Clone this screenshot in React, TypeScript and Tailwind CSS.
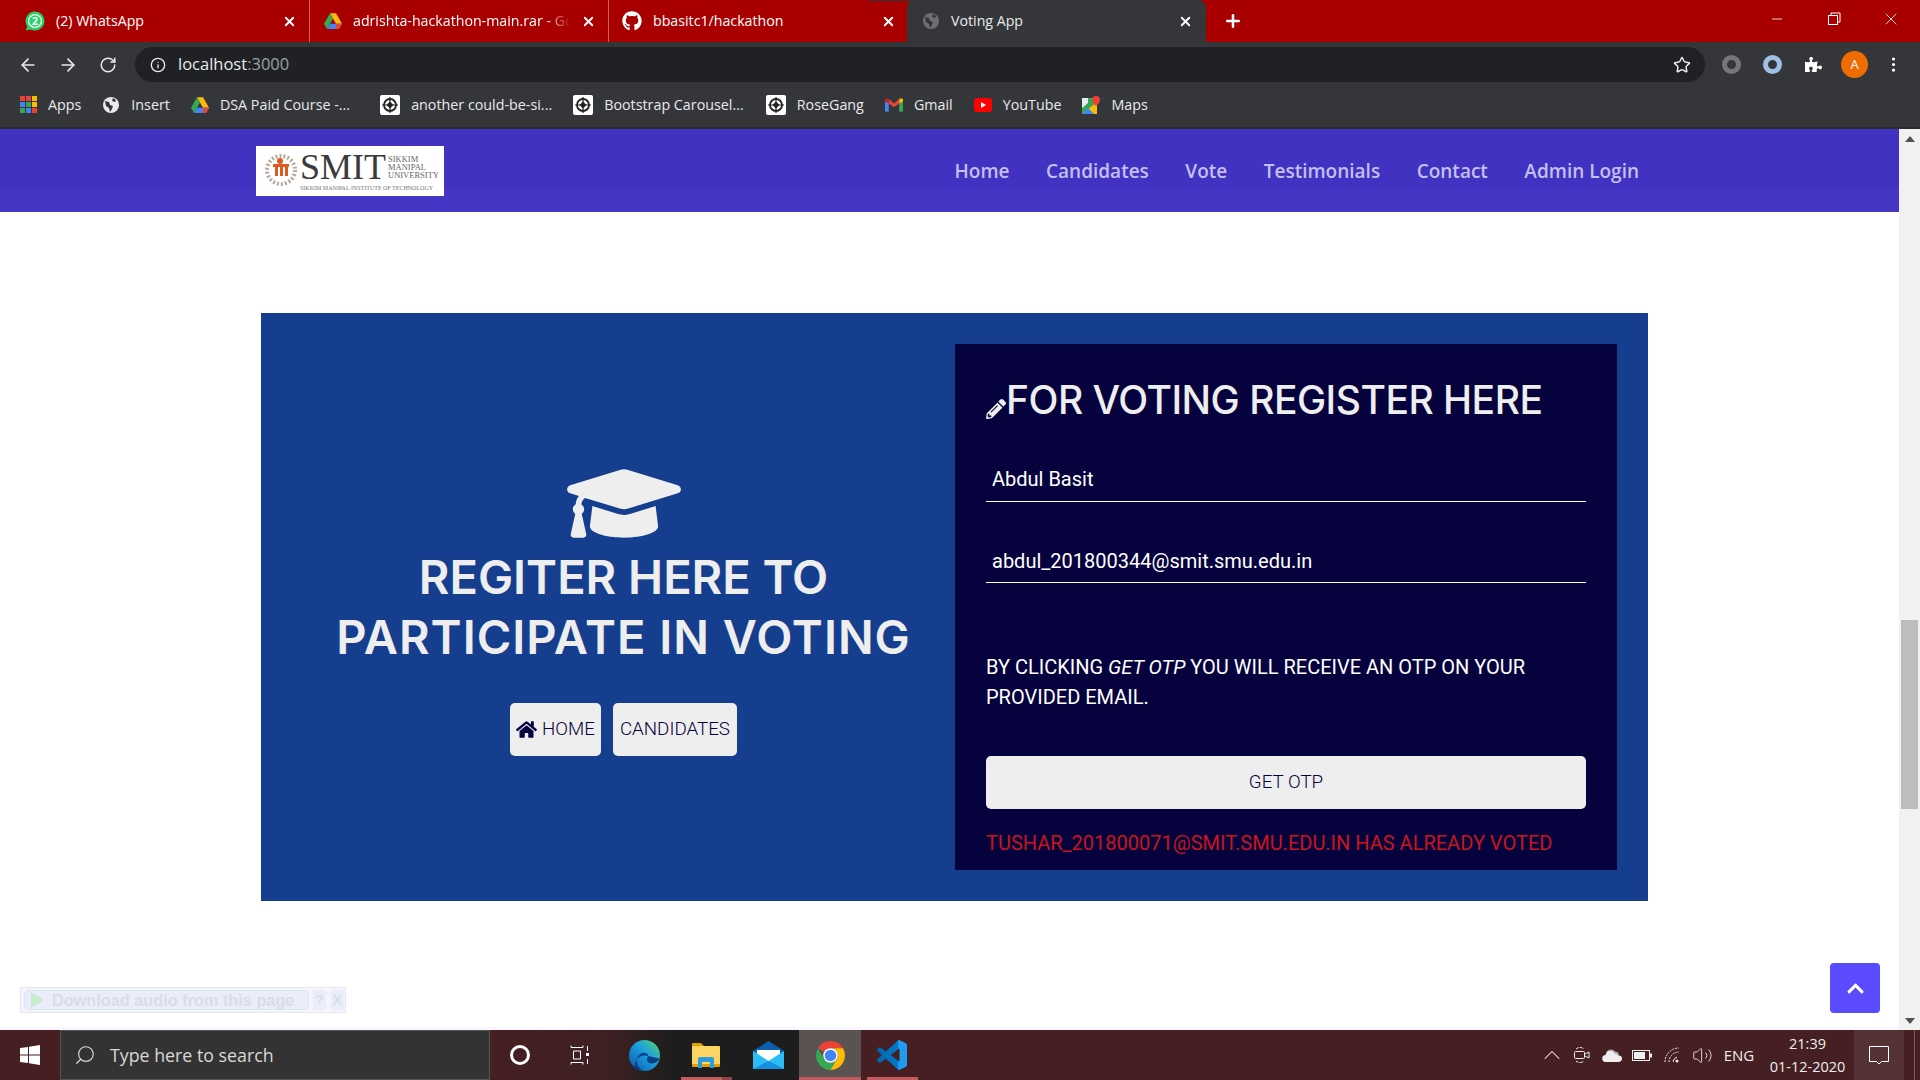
import React from 'react';
import { FaChevronUp, FaGithub, FaGraduationCap, FaHome, FaPencilAlt, FaPuzzlePiece } from 'react-icons/fa';
import { ArrowLeft, ArrowRight, ChevronUp, Info, Minus, MoreVertical, Plus, RotateCw, Search, Star, Volume2, X } from 'lucide-react';

function WhatsappBadge() {
  return (
    <svg width="20" height="20" viewBox="0 0 20 20">
      <path d="M10 0.500a9.500 9.500 0 0 1 0 19 9.500 9.500 0 0 1-4.500-1.100L1 19.500l1.200-4.300A9.500 9.500 0 0 1 10 0.500z" fill="#25d366" />
      <circle cx="10" cy="10" r="7" fill="#fff" />
      <circle cx="10" cy="10" r="5.800" fill="#25d366" />
      <text x="10" y="14" textAnchor="middle" fontSize="11" fontWeight="700" fill="#fff" fontFamily="Open Sans, sans-serif">2</text>
    </svg>
  );
}

function DriveIcon() {
  return (
    <svg width="18" height="16" viewBox="0 0 24 21">
      <path d="M8 0h8l8 14h-8z" fill="#fbbc04" />
      <path d="M8 0l4 7-8 14-4-7z" fill="#34a853" />
      <path d="M8 14h16l-4 7H4z" fill="#4285f4" />
      <path d="M17 14h7l-4 7h-5z" fill="#ea4335" />
    </svg>
  );
}

function GmailIcon() {
  return (
    <svg width="18" height="14" viewBox="0 0 24 18">
      <path d="M0 3l5 3v12H2a2 2 0 0 1-2-2z" fill="#4285f4" />
      <path d="M24 3l-5 3v12h3a2 2 0 0 0 2-2z" fill="#34a853" />
      <path d="M5 1l7 6 7-6v6l-7 5-7-5z" fill="#ea4335" />
      <path d="M19 1l2-1 3 1v3l-5 3z" fill="#fbbc04" />
      <path d="M5 1L3 0 0 1v3l5 3z" fill="#c5221f" />
    </svg>
  );
}

function YoutubeIcon() {
  return (
    <svg width="18" height="14" viewBox="0 0 18 14">
      <rect width="18" height="14" rx="3" fill="#f00" />
      <path d="M7 4l5 3-5 3z" fill="#fff" />
    </svg>
  );
}

function MapsIcon() {
  return (
    <svg width="18" height="18" viewBox="0 0 18 18">
      <rect y="2" width="15" height="16" fill="#34a853" />
      <path d="M0 18L15 6v12z" fill="#fbbc04" />
      <path d="M0 18l6-6 6 6z" fill="#4285f4" />
      <path d="M0 2h6v5L0 12z" fill="#e8eaed" />
      <path d="M14 0a4 4 0 0 1 4 4c0 3-4 6-4 6s-4-3-4-6a4 4 0 0 1 4-4z" fill="#ea4335" />
    </svg>
  );
}

function GlobeIcon({ dim }: { dim?: boolean }) {
  return (
    <svg width="18" height="18" viewBox="0 0 18 18">
      <circle cx="9" cy="9" r="8" fill={dim ? '#6d6f74' : '#e8eaed'} />
      <path d="M3 5l4 1 1 3 3 1-1 3-2 3-1-4-3-2zM11 2l3 2-1 2-3-1z" fill="#35363a" />
    </svg>
  );
}

function BootstrapFavicon() {
  return (
    <svg width="20" height="20" viewBox="0 0 20 20">
      <rect width="20" height="20" rx="2" fill="#fff" />
      <circle cx="10" cy="10" r="6" fill="none" stroke="#222" strokeWidth="1.800" />
      <path d="M10 2v16M2 10h16" stroke="#222" strokeWidth="1.200" />
      <rect x="7.500" y="7.500" width="5" height="5" fill="#222" transform="rotate(45 10 10)" />
    </svg>
  );
}

function AppsIcon() {
  const colors = ['#ea4335', '#ea4335', '#fbbc04', '#4285f4', '#34a853', '#fbbc04', '#34a853', '#4285f4', '#ea4335'];
  return (
    <div className="grid grid-cols-3 gap-[1px] w-[17px]">
      {colors.map((c, i) => (
        <span key={i} className="w-[5px] h-[5px]" style={{ backgroundColor: c }} />
      ))}
    </div>
  );
}

function Bookmark({ icon, label, className }: { icon: React.ReactNode; label: string; className?: string }) {
  return (
    <div className={'flex items-center gap-[11px] text-[14.3px] text-[#e8eaed] whitespace-nowrap ' + (className || '')}>
      {icon}
      <span>{label}</span>
    </div>
  );
}

function BrowserChrome() {
  return (
    <div className="font-['Open_Sans',sans-serif] shrink-0">
      <div className="relative h-[42px] bg-[#a80000] flex items-center text-[14.2px]">
        <div className="absolute left-[868px] top-0 w-[242px] h-[1px] bg-[#35363a]" />
        <div className="w-[310px] h-[42px] flex items-center pl-[25px] pr-[12px] border-r border-[#cf6060] text-white">
          <WhatsappBadge />
          <span className="ml-[11px] flex-1">(2) WhatsApp</span>
          <X size={15} strokeWidth={3} />
        </div>
        <div className="w-[299px] h-[42px] flex items-center pl-[14px] pr-[12px] border-r border-[#cf6060] text-white">
          <DriveIcon />
          <span className="ml-[11px] w-[218px] overflow-hidden whitespace-nowrap [mask-image:linear-gradient(90deg,#000_88%,transparent)]">
            adrishta-hackathon-main.rar - Google Drive
          </span>
          <X size={15} strokeWidth={3} className="ml-auto" />
        </div>
        <div className="w-[298px] h-[42px] flex items-center pl-[13px] pr-[11px] text-white">
          <FaGithub size={20} />
          <span className="ml-[11px] flex-1">bbasitc1/hackathon</span>
          <X size={15} strokeWidth={3} />
        </div>
        <div className="w-[299px] h-[42px] bg-[#35363a] rounded-t-[8px] flex items-center pl-[15px] pr-[13px] text-[#e8eaed]">
          <GlobeIcon dim />
          <span className="ml-[11px] flex-1">Voting App</span>
          <X size={15} strokeWidth={3} className="text-white" />
        </div>
        <Plus size={20} strokeWidth={3} className="text-white ml-[17px]" />
        <div className="ml-auto mb-[4px] flex items-center text-white">
          <Minus size={16} strokeWidth={1.2} className="mr-[42px]" />
          <svg width="14" height="14" viewBox="0 0 14 14" fill="none" stroke="currentColor" className="mr-[40px]">
            <rect x="1.500" y="3.500" width="9" height="9" />
            <path d="M4 3V1h9v9h-2" />
          </svg>
          <X size={20} strokeWidth={1} className="mr-[19px]" />
        </div>
      </div>
      <div className="h-[42px] pt-[3px] bg-[#35363a] flex items-center">
        <ArrowLeft size={20} className="ml-[18px] text-[#e8eaed]" />
        <ArrowRight size={20} className="ml-[20px] text-[#e8eaed]" />
        <RotateCw size={18} className="ml-[21px] text-[#e8eaed]" />
        <div className="ml-[18px] w-[1570px] h-[35px] rounded-full bg-[#202124] flex items-center pl-[15px] pr-[14px] text-[16.5px]">
          <Info size={16} className="text-[#e8eaed]" />
          <span className="ml-[12px] text-[#e8eaed]">localhost<span className="text-[#9aa0a6]">:3000</span></span>
          <Star size={18} className="ml-auto text-[#e8eaed]" />
        </div>
        <div className="ml-[6px] flex items-center">
          <div className="w-[41px] flex justify-center">
            <span className="w-[19px] h-[19px] rounded-full border-[5px] border-[#75777d]" />
          </div>
          <div className="w-[41px] flex justify-center">
            <span className="w-[19px] h-[19px] rounded-full border-[5px] border-[#9fc0e4]" />
          </div>
          <div className="w-[41px] flex justify-center">
            <FaPuzzlePiece size={17} className="text-white" />
          </div>
          <div className="w-[41px] flex justify-center">
            <span className="w-[27px] h-[27px] rounded-full bg-[#ef6c00] text-white text-[13px] flex items-center justify-center">A</span>
          </div>
          <div className="w-[36px] flex justify-center">
            <MoreVertical size={19} className="text-white" />
          </div>
        </div>
      </div>
      <div className="h-[43px] pb-[2px] bg-[#35363a] flex items-center pl-[20px] gap-[21px]">
        <Bookmark icon={<AppsIcon />} label="Apps" />
        <Bookmark icon={<GlobeIcon />} label="Insert" />
        <Bookmark icon={<DriveIcon />} label="DSA Paid Course -..." className="mr-[9px]" />
        <Bookmark icon={<BootstrapFavicon />} label="another could-be-si..." />
        <Bookmark icon={<BootstrapFavicon />} label="Bootstrap Carousel..." className="mr-[1px]" />
        <Bookmark icon={<BootstrapFavicon />} label="RoseGang" />
        <Bookmark icon={<GmailIcon />} label="Gmail" />
        <Bookmark icon={<YoutubeIcon />} label="YouTube" />
        <Bookmark icon={<MapsIcon />} label="Maps" />
      </div>
      <div className="h-[2px] bg-[#2a2b2e]" />
    </div>
  );
}

function SmitLogo() {
  return (
    <div className="w-[188px] h-[50px] bg-white flex items-center pl-[8px] font-['Liberation_Serif',serif] text-[#444]">
      <svg width="34" height="38" viewBox="0 0 34 38" className="shrink-0">
        <circle cx="17" cy="18" r="14" fill="none" stroke="#b9a89c" strokeWidth="4" strokeDasharray="2 2" />
        <circle cx="16" cy="9" r="3" fill="#dd5a1e" />
        <rect x="9" y="12" width="16" height="3" fill="#dd5a1e" />
        <rect x="11" y="15" width="3" height="9" fill="#dd5a1e" />
        <rect x="16" y="15" width="3" height="9" fill="#dd5a1e" />
        <rect x="21" y="15" width="3" height="9" fill="#dd5a1e" />
      </svg>
      <div className="ml-[2px] flex flex-col">
        <div className="flex items-center">
          <span className="text-[36px] leading-[36px] text-[#3a3a3a]">SMIT</span>
          <span className="ml-[2px] text-[8.500px] leading-[8px] text-[#666]">SIKKIM<br />MANIPAL<br />UNIVERSITY</span>
        </div>
        <span className="text-[6px] leading-[7px] text-[#777] whitespace-nowrap">SIKKIM MANIPAL INSTITUTE OF TECHNOLOGY</span>
      </div>
    </div>
  );
}

function Navbar() {
  const links = ['Home', 'Candidates', 'Vote', 'Testimonials', 'Contact', 'Admin Login'];
  return (
    <nav className="h-[83px] shrink-0 bg-[linear-gradient(#4132c1_0,#4132c1_71%,#4636c5_71%)] flex items-center pl-[256px]">
      <SmitLogo />
      <div className="ml-auto mr-[281px] mt-[2px] flex items-center gap-[36.5px] font-['Open_Sans',sans-serif] font-semibold text-[19px] text-[#c4c0ee]">
        {links.map((l) => (
          <span key={l}>{l}</span>
        ))}
      </div>
    </nav>
  );
}

function UnderlineInput({ value, className }: { value: string; className: string }) {
  return (
    <div className={'h-[44px] border-b border-white px-[6px] flex items-center text-[20px] text-white ' + className}>
      {value}
    </div>
  );
}

function Hero() {
  return (
    <div className="flex-1 relative overflow-hidden font-['Roboto',sans-serif]">
      <div className="mt-[101px] ml-[261px] w-[1387px] h-[588px] bg-[#163e8f] p-[31px] flex">
        <div className="w-[663px] shrink-0 flex flex-col items-center pt-[114px]">
          <FaGraduationCap className="text-[#eeeeee] w-[114px] h-[91px]" />
          <h1 className="-mt-[2px] font-['Inter',sans-serif] font-semibold text-[47px] leading-[60px] text-[#eeeeee] text-center whitespace-nowrap">
            <span>REGITER HERE TO</span>
            <br />
            <span className="tracking-[1px]">PARTICIPATE IN VOTING</span>
          </h1>
          <div className="mt-[36px] flex gap-[12px]">
            <button className="h-[53px] px-[6px] rounded-[5px] bg-[#eeeeee] text-[#05023d] text-[18.75px] font-light flex items-center gap-[5px]">
              <FaHome size={21} />
              HOME
            </button>
            <button className="h-[53px] px-[7px] rounded-[5px] bg-[#eeeeee] text-[#05023d] text-[18.75px] font-light">CANDIDATES</button>
          </div>
        </div>
        <div className="w-[662px] h-[526px] bg-[#05023d] px-[31px] pt-[31px]">
          <h2 className="flex items-end font-['Inter',sans-serif] font-medium text-[39px] leading-[50px] tracking-[-0.5px] text-[#eeeeee] whitespace-nowrap">
            <FaPencilAlt size={20} className="mb-[6px]" />
            FOR VOTING REGISTER HERE
          </h2>
          <UnderlineInput value="Abdul Basit" className="mt-[33px] pb-[1px]" />
          <UnderlineInput value="abdul_201800344@smit.smu.edu.in" className="mt-[37px]" />
          <p className="mt-[69px] text-[20px] leading-[30px] text-white">
            BY CLICKING <em>GET OTP</em> YOU WILL RECEIVE AN OTP ON YOUR PROVIDED EMAIL.
          </p>
          <button className="mt-[44px] w-full h-[53px] rounded-[5px] bg-[#eeeeee] text-[#05023d] text-[18.75px] font-light">GET OTP</button>
          <p className="mt-[19px] text-[20px] leading-[30px] text-[#c8151b] whitespace-nowrap">
            TUSHAR_201800071@SMIT.SMU.EDU.IN HAS ALREADY VOTED
          </p>
        </div>
      </div>
      <div className="absolute left-[20px] bottom-[17px] w-[326px] h-[26px] bg-[#f3f5fb] border border-[#e6e9f2] flex items-center pl-[3px] font-['Liberation_Sans',sans-serif] font-bold text-[16.3px] text-[#d9dde8]">
        <div className="w-[285px] h-[20px] rounded-[5px] border border-[#dde3f2] bg-[#eaeefa] flex items-center whitespace-nowrap overflow-hidden">
          <span className="w-0 h-0 border-y-[8px] border-y-transparent border-l-[13px] border-l-[#c7eccb] ml-[6px] mr-[8px]" />
          Download audio from this page
        </div>
        <span className="ml-[4px] w-[13px] h-[20px] rounded-[3px] bg-[#eaeefa] text-[14px] text-center leading-[20px]">?</span>
        <span className="ml-[5px] w-[13px] h-[20px] rounded-[3px] bg-[#eaeefa] text-[14px] text-center leading-[20px]">X</span>
      </div>
      <button className="absolute right-[40px] bottom-[17px] w-[50px] h-[50px] rounded-[4px] bg-[#5a4bff] text-white flex items-center justify-center">
        <FaChevronUp size={19} />
      </button>
      <div className="absolute left-0 right-0 bottom-0 h-[3px] bg-[#f8f6ff]" />
    </div>
  );
}

function Scrollbar() {
  return (
    <div className="absolute right-0 top-[129px] bottom-[50px] w-[21px] bg-[#f1f1f1]">
      <div className="absolute top-[7px] left-[6px] w-0 h-0 border-x-[5px] border-x-transparent border-b-[6px] border-b-[#505050]" />
      <div className="absolute top-[491px] left-[2px] w-[17px] h-[189px] bg-[#bdbdbd]" />
      <div className="absolute bottom-[6px] left-[6px] w-0 h-0 border-x-[5px] border-x-transparent border-t-[6px] border-t-[#505050]" />
    </div>
  );
}

function EdgeIcon() {
  return (
    <svg width="31" height="31" viewBox="0 0 30 30">
      <defs>
        <linearGradient id="edge-a" x1="0" y1="1" x2="1" y2="0">
          <stop offset="0" stopColor="#0c59a4" />
          <stop offset="0.55" stopColor="#1b9de2" />
          <stop offset="1" stopColor="#52d86a" />
        </linearGradient>
      </defs>
      <circle cx="15" cy="15" r="15" fill="url(#edge-a)" />
      <path d="M29.500 18c-1 3-5 5.500-9 4.500-3-1-4-3.500-2.500-6 1-1.700.5-3.500-2-4-4-.7-8.500 2.500-8.500 8 0 4 3.500 8.500 7 9.500-8 .5-14-6-14.500-12 1 5 4 7 6 7-1-5 4-11 10-10 5 1 9 2 13.500 3z" fill="#0d3f87" />
    </svg>
  );
}

function ExplorerIcon() {
  return (
    <svg width="28" height="26" viewBox="0 0 28 26">
      <path d="M0 2a1 1 0 0 1 1-1h8l3 3H0z" fill="#e0a100" />
      <rect y="4" width="28" height="20" rx="1" fill="#fcd462" />
      <path d="M0 22h28v2a1 1 0 0 1-1 1H1a1 1 0 0 1-1-1z" fill="#e0a100" />
      <path d="M6 26v-9a2 2 0 0 1 2-2h12a2 2 0 0 1 2 2v9h-4v-6h-8v6z" fill="#2c9be0" />
    </svg>
  );
}

function MailIcon() {
  return (
    <svg width="31" height="28" viewBox="0 0 31 28">
      <path d="M15.500 0L31 10v18H0V10z" fill="#0b5fae" />
      <path d="M4 9h23v8l-11.500 6L4 17z" fill="#fff" />
      <path d="M0 10l15.500 10L31 10v18H0z" fill="#2bbcf5" />
      <path d="M0 28l15.500-8L31 28z" fill="#1490df" />
    </svg>
  );
}

function ChromeIcon() {
  return (
    <svg width="29" height="29" viewBox="4 4 40 40">
      <path d="M24 4a20 20 0 0 1 17.320 10H24a10 10 0 0 0-8.660 5L6.680 14A20 20 0 0 1 24 4z" fill="#ea4335" />
      <path d="M6.680 14A20 20 0 0 0 24 44l8.660-15a10 10 0 0 1-17.320 0z" fill="#34a853" />
      <path d="M41.320 14H24a10 10 0 0 1 8.660 15L24 44A20 20 0 0 0 41.320 14z" fill="#fbbc04" />
      <circle cx="24" cy="24" r="10" fill="#fff" />
      <circle cx="24" cy="24" r="8" fill="#4285f4" />
    </svg>
  );
}

function VscodeIcon() {
  return (
    <svg width="30" height="30" viewBox="0 0 24 24">
      <defs>
        <linearGradient id="vsc-a" x1="0" y1="0" x2="1" y2="0">
          <stop offset="0" stopColor="#0065a9" />
          <stop offset="0.7" stopColor="#007acc" />
          <stop offset="0.71" stopColor="#1f9cf0" />
        </linearGradient>
      </defs>
      <path
        d="M23.150 2.587L18.210.210a1.494 1.494 0 0 0-1.705.290l-9.460 8.630-4.120-3.128a.999.999 0 0 0-1.276.057L.327 7.261A1 1 0 0 0 .326 8.740L3.899 12 .326 15.260a1 1 0 0 0 .001 1.479L1.650 17.940a.999.999 0 0 0 1.276.057l4.120-3.128 9.460 8.630a1.492 1.492 0 0 0 1.704.290l4.942-2.377A1.500 1.500 0 0 0 24 20.060V3.939a1.500 1.500 0 0 0-.850-1.352zm-5.146 14.861L10.826 12l7.178-5.448v10.896z"
        fill="url(#vsc-a)"
      />
    </svg>
  );
}

function TrayIcons() {
  return (
    <>
      <div className="w-[30px] flex justify-center">
        <ChevronUp size={28} strokeWidth={0.9} />
      </div>
      <div className="w-[30px] flex justify-center">
        <svg width="16" height="18" viewBox="0 0 16 18" fill="none" stroke="currentColor">
          <path d="M2 3a6 6 0 0 1 8 0M2 15a6 6 0 0 0 8 0" strokeDasharray="3 1" />
          <rect x="0.500" y="5.500" width="10" height="7" rx="1" />
          <path d="M11 8l4-2v6l-4-2" />
        </svg>
      </div>
      <div className="w-[30px] flex justify-center">
        <svg width="20" height="13" viewBox="0 0 20 13">
          <path d="M4 5a5 5 0 0 1 9-2.500A4 4 0 0 1 17 6H4z" fill="#b5a8a8" />
          <path d="M4 13a3.500 3.500 0 0 1-.500-7A5 5 0 0 1 13 5a3.500 3.500 0 0 1 3.500 1.500A3.200 3.200 0 0 1 17 13z" fill="#eeeeee" />
        </svg>
      </div>
      <div className="w-[30px] flex justify-center">
        <svg width="20" height="11" viewBox="0 0 20 11">
          <rect x="0.500" y="0.500" width="17" height="10" fill="none" stroke="#eee" />
          <rect x="2" y="2" width="11" height="7" fill="#eee" />
          <rect x="18" y="3.500" width="2" height="4" fill="#eee" />
        </svg>
      </div>
      <div className="w-[30px] flex justify-center">
        <svg width="16" height="16" viewBox="0 0 16 16" fill="none" stroke="#eee">
          <path d="M1 15A14 14 0 0 1 15 1" strokeDasharray="2 1" />
          <path d="M5 15A10 10 0 0 1 15 5" strokeDasharray="2 1" />
          <path d="M9 15a6 6 0 0 1 4-5" />
          <circle cx="13" cy="14" r="1.500" fill="#eee" stroke="none" />
        </svg>
      </div>
      <div className="w-[30px] flex justify-center">
        <Volume2 size={21} strokeWidth={1} />
      </div>
    </>
  );
}

function Taskbar() {
  return (
    <div className="h-[50px] shrink-0 bg-[#451f22] flex items-center font-['Open_Sans',sans-serif] text-white">
      <svg width="20" height="20" viewBox="0 0 20 20" fill="#fff" className="ml-[20px]">
        <path d="M0 3l8-1v7.500H0zM9 1.800L20 0v9.500H9zM0 10.500h8V18l-8-1zM9 10.500h11V20L9 18.200z" />
      </svg>
      <div className="ml-[20px] w-[430px] h-[50px] bg-[#333333] border border-[#555] flex items-center pl-[13px] text-[17.8px] text-[#d8d8d8]">
        <Search size={22} strokeWidth={1.3} className="-scale-x-100" />
        <span className="ml-[14px]">Type here to search</span>
      </div>
      <div className="h-[50px] flex items-center bg-[linear-gradient(90deg,#451f22_0,#3e2023_28%,#1d1d1d_42%)]">
        <div className="w-[60px] flex justify-center">
          <span className="w-[20px] h-[20px] rounded-full border-[3px] border-white" />
        </div>
        <div className="w-[60px] mr-[3px] flex justify-center">
          <svg width="20" height="20" viewBox="0 0 20 20" fill="none" stroke="#fff">
            <path d="M1 2.500h12M3.500 6h7v8h-7zM1 17.500h12M1 .500v2M13 .500v2M1 17.500v2M13 17.500v2M17.500 1v5M17.500 14v5" />
            <rect x="16" y="8" width="3" height="3" fill="#fff" stroke="none" />
          </svg>
        </div>
        <div className="w-[62px] flex justify-center"><EdgeIcon /></div>
        <div className="relative w-[62px] h-[50px] flex items-center justify-center">
          <ExplorerIcon />
          <span className="absolute left-[6px] bottom-0 w-[41px] h-[3px] bg-[#c25b5e]" />
          <span className="absolute left-[47px] bottom-0 w-[10px] h-[3px] bg-[#8d4648]" />
        </div>
        <div className="w-[62px] flex justify-center"><MailIcon /></div>
        <div className="relative w-[62px] h-[50px] bg-[#5a5352] flex items-center justify-center">
          <ChromeIcon />
          <span className="absolute left-0 bottom-0 w-full h-[3px] bg-[#c25b5e]" />
        </div>
        <div className="relative w-[62px] h-[50px] bg-[#451f22] flex items-center justify-center">
          <VscodeIcon />
          <span className="absolute left-[6px] bottom-0 w-[51px] h-[3px] bg-[#c25b5e]" />
        </div>
      </div>
      <div className="ml-auto flex items-center text-[#eee] h-[50px]">
        <TrayIcons />
        <span className="w-[44px] text-center text-[15px]">ENG</span>
        <div className="w-[93px] text-[14.5px] text-center leading-[23px]">
          21:39<br />01-12-2020
        </div>
        <div className="w-[50px] h-[50px] bg-[#553335] flex items-center justify-center">
          <svg width="20" height="20" viewBox="0 0 20 20" fill="none" stroke="#fff">
            <path d="M.500 1.500h19v15h-7l-2.500 2.500-2.500-2.500h-7z" />
          </svg>
        </div>
        <div className="w-[16px] h-[50px] flex justify-center pl-[4px]">
          <div className="w-[1px] h-full bg-[#7a6062]" />
        </div>
      </div>
    </div>
  );
}

export default function App() {
  return (
    <div className="relative w-[1920px] h-[1080px] overflow-hidden flex flex-col bg-white">
      <BrowserChrome />
      <Navbar />
      <Hero />
      <Scrollbar />
      <Taskbar />
    </div>
  );
}
